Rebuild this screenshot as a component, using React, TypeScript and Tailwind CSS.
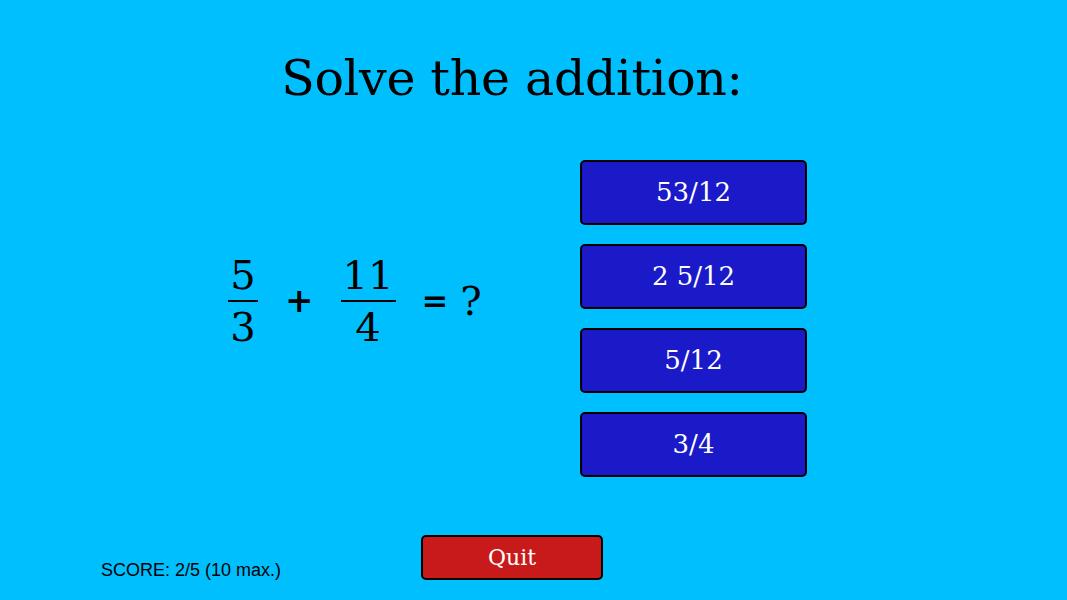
import React from "react";

const answers = ["53/12", "2 5/12", "5/12", "3/4"];

function Fraction({ top, bottom, width }: { top: string; bottom: string; width: string }) {
    return (
        <div className={`flex flex-col items-center ${width}`}>
            <span className="leading-none">{top}</span>
            <div className="w-full h-[2px] bg-black my-[5px]"></div>
            <span className="leading-none">{bottom}</span>
        </div>
    );
}

export default function App() {
    return (
        <div className="w-full h-[600px] bg-[#00bfff] overflow-hidden" style={{ fontFamily: '"DejaVu Serif", serif' }}>
            <div className="w-[1024px] h-[600px] flex flex-col">
                <h1 className="text-center text-[49px] leading-none pt-[54px] text-black tracking-[-0.3px]">Solve the addition:</h1>

                <div className="flex flex-row mt-[57px]">
                    <div className="w-[580px] flex items-center pl-[228px] pb-[36px] text-[40px] text-black">
                        <Fraction top="5" bottom="3" width="w-[30px]" />
                        <span className="ml-[27px] mr-[27px] text-[34px] font-bold">+</span>
                        <Fraction top="11" bottom="4" width="w-[55px]" />
                        <span className="ml-[26px] text-[32px] font-bold">=</span>
                        <span className="ml-[12px] text-[40px]">?</span>
                    </div>
                    <div className="flex flex-col gap-[19px]">
                        {answers.map((a) => (
                            <button
                                key={a}
                                className="w-[227px] h-[65px] bg-[#1a1ac8] border-2 border-black rounded-[5px] text-white text-[26px] whitespace-pre"
                                style={{ fontFamily: '"DejaVu Serif", serif' }}
                            >
                                {a}
                            </button>
                        ))}
                    </div>
                </div>

                <div className="grid grid-cols-[1fr_auto_1fr] mt-auto mb-[20px]">
                    <div className="flex items-end pl-[101px]">
                        <span className="text-[18px] text-black leading-none mb-[1px]" style={{ fontFamily: '"Liberation Sans", Arial, sans-serif' }}>
                            SCORE: 2/5 (10 max.)
                        </span>
                    </div>
                    <button
                        className="w-[182px] h-[45px] bg-[#c81a1a] border-2 border-black rounded-[5px] text-white text-[22px]"
                        style={{ fontFamily: '"DejaVu Serif", serif' }}
                    >
                        Quit
                    </button>
                    <div></div>
                </div>
            </div>
        </div>
    );
}
